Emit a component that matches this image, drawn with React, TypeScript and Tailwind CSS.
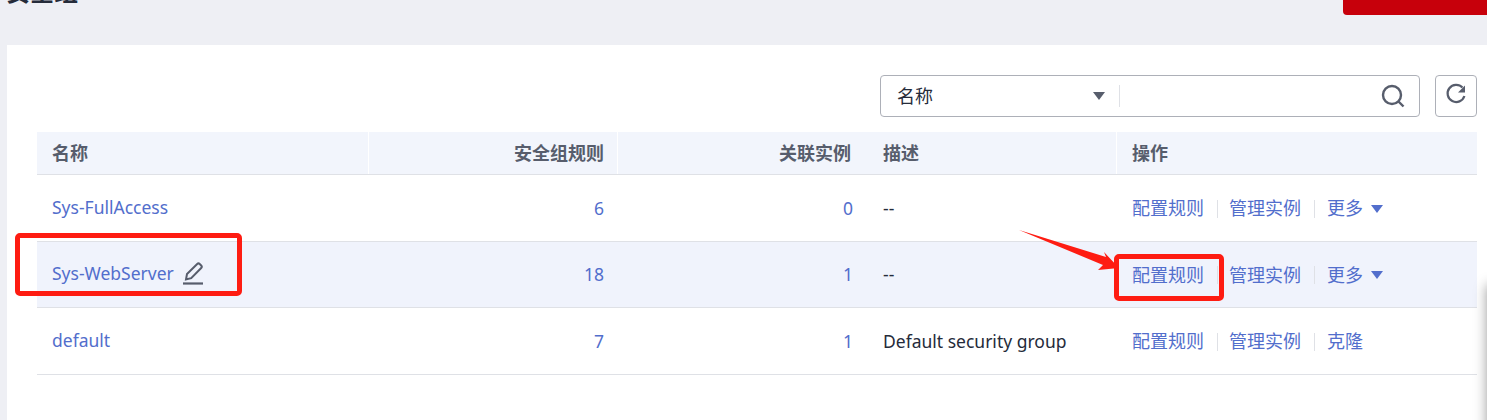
const SANS = "font-['Noto_Sans','Noto_Sans_CJK_SC',sans-serif]";

type Row = {
  name: string;
  rules: string;
  instances: string;
  desc: string;
  last: string;
  more?: boolean;
  edit?: boolean;
  hover?: boolean;
};

const rows: Row[] = [
  { name: "Sys-FullAccess", rules: "6", instances: "0", desc: "--", last: "更多", more: true },
  { name: "Sys-WebServer", rules: "18", instances: "1", desc: "--", last: "更多", more: true, edit: true, hover: true },
  { name: "default", rules: "7", instances: "1", desc: "Default security group", last: "克隆" },
];

function PencilIcon() {
  return (
    <svg viewBox="0 0 22 24" className="ml-2 h-6 w-[22px] shrink-0" fill="none" stroke="#575d6c" strokeWidth="2" aria-hidden="true">
      <path d="M4 18.5 5 13 15.2 3a1.8 1.8 0 0 1 2.5 0l1.5 1.5a1.8 1.8 0 0 1 0 2.5L9.2 17.2 4 18.5Z" />
      <path d="M1 22.5h20" strokeWidth="2.2" />
    </svg>
  );
}

function SearchIcon() {
  return (
    <svg viewBox="0 0 24 24" className="h-6 w-6 shrink-0" fill="none" stroke="#575d6c" strokeWidth="2.4" aria-hidden="true">
      <circle cx="11" cy="11" r="9" />
      <path d="m17.5 17.5 5 5" />
    </svg>
  );
}

function RefreshIcon() {
  return (
    <svg viewBox="0 0 22 22" className="-mt-1 h-[22px] w-[22px] shrink-0" fill="none" aria-hidden="true">
      <path d="M17.5 4.6A8.6 8.6 0 1 0 19.4 13" stroke="#575d6c" strokeWidth="2.2" />
      <path d="M20 2.5v7h-7Z" fill="#575d6c" />
    </svg>
  );
}

function Caret({ color }: { color: string }) {
  return (
    <svg viewBox="0 0 12 8" className="h-2 w-3 shrink-0" aria-hidden="true">
      <path d="M0 0h12L6 8Z" fill={color} />
    </svg>
  );
}

function Divider() {
  return <span className="mr-[11px] ml-[13px] h-[18px] w-px bg-[#dfe1e6]" />;
}

function TableRow({ row }: { row: Row }) {
  return (
    <div className={`flex h-[66.6px] items-center border-b border-[#dfe1e6] text-[17.5px] ${row.hover ? "bg-[#f0f3fc]" : "bg-white"}`}>
      <div className="flex w-[332px] items-center pb-[2px] pl-[15px] text-[#526ecc]">
        <span>{row.name}</span>
        {row.edit && <PencilIcon />}
      </div>
      <div className="w-[249px] pr-[14px] text-right text-[#526ecc]">{row.rules}</div>
      <div className="w-[249px] pr-[14px] text-right text-[#526ecc]">{row.instances}</div>
      <div className="w-[250px] pl-[16px] text-[#252b3a]">{row.desc}</div>
      <div className="flex flex-1 items-center pt-[2px] pl-[15px] text-[18px] text-[#526ecc]">
        <span>配置规则</span>
        <Divider />
        <span>管理实例</span>
        <Divider />
        <span className="ml-px">{row.last}</span>
        {row.more && (
          <span className="ml-2">
            <Caret color="#526ecc" />
          </span>
        )}
      </div>
    </div>
  );
}

export default function App() {
  return (
    <div className={`relative h-[420px] w-[1487px] overflow-hidden bg-[#eeeff4] ${SANS}`}>
      <div className="flex h-[45px] items-start justify-between overflow-hidden">
        <div className="-mt-[24px] ml-[6px] flex items-center">
          <h1 className="text-2xl leading-[32px] font-bold text-[#252b3a]">安全组</h1>
          <span className="ml-[25px] h-4 w-4 rounded-full border-2 border-[#8a8e99]" />
        </div>
        <div className="h-[15px] w-[144px] rounded-bl-sm bg-[#c7000b]" />
      </div>

      <div className="ml-[7px] h-[375px] bg-white pt-[30px] pr-[10px] pl-[30px]">
        <div className="flex justify-end">
          <div className="flex h-[42px] w-[540px] items-center rounded-sm border border-[#adb0b8] pr-[14px] pl-[16px]">
            <span className="flex-1 text-[18px] text-[#252b3a]">名称</span>
            <Caret color="#575d6c" />
            <span className="mr-[261px] ml-[14px] h-[22px] w-px bg-[#dfe1e6]" />
            <SearchIcon />
          </div>
          <div className="ml-[15px] flex h-[42px] w-[42px] items-center justify-center rounded-sm border border-[#adb0b8]">
            <RefreshIcon />
          </div>
        </div>

        <div className="mt-[15px]">
          <div className="flex h-[43px] items-center border-b border-[#dfe1e6] bg-[#f2f5fc] text-[18px] font-bold text-[#575d6c]">
            <div className="w-[332px] self-stretch border-r border-white pl-[15px] leading-[42px]">名称</div>
            <div className="w-[249px] self-stretch border-r border-white pr-[13px] text-right leading-[42px]">安全组规则</div>
            <div className="w-[249px] self-stretch pr-[16px] text-right leading-[42px]">关联实例</div>
            <div className="w-[250px] self-stretch border-r border-white pl-[16px] leading-[42px]">描述</div>
            <div className="flex-1 pl-[15px]">操作</div>
          </div>
          {rows.map((row) => (
            <TableRow key={row.name} row={row} />
          ))}
        </div>
      </div>

      {/* shadow of a panel just off the right edge */}
      <div className="absolute top-[285px] left-[1487px] h-[200px] w-[50px] shadow-[0_0_12px_rgba(0,0,0,0.4)]" />

      {/* red annotations drawn over the screenshot */}
      <div className="absolute top-[233px] left-[15px] h-[63px] w-[227px] rounded-[5px] border-[5px] border-[#fe1c12]" />
      <div className="absolute top-[254px] left-[1114px] h-[47px] w-[110px] rounded-[5px] border-[5px] border-[#fe1c12]" />
      <svg className="absolute top-[225px] left-[1015px] h-[50px] w-[105px]" viewBox="0 0 105 50" aria-hidden="true">
        <path d="M4 5 91 32 89 27 104 43 83 45 88 40Z" fill="#fe1c12" />
      </svg>
    </div>
  );
}
